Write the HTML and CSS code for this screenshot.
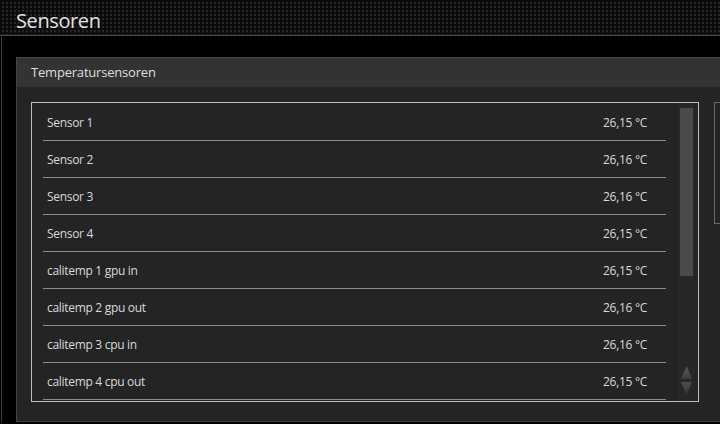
FILE: index.html
```html
<!DOCTYPE html>
<html lang="de">
<head>
<meta charset="utf-8">
<title>Sensoren</title>
<link rel="stylesheet" href="styles.css">
</head>
<body>
<header class="topbar"><h1 class="title">Sensoren</h1></header>
<main class="frame">
  <section class="panel">
    <div class="panel-head">Temperatursensoren</div>
    <div class="panel-body">
      <div class="listbox">
        <ul class="rows">
          <li class="row"><span>Sensor 1</span><span>26,15 °C</span></li>
          <li class="row"><span>Sensor 2</span><span>26,16 °C</span></li>
          <li class="row"><span>Sensor 3</span><span>26,16 °C</span></li>
          <li class="row"><span>Sensor 4</span><span>26,15 °C</span></li>
          <li class="row"><span>calitemp 1 gpu in</span><span>26,15 °C</span></li>
          <li class="row"><span>calitemp 2 gpu out</span><span>26,16 °C</span></li>
          <li class="row"><span>calitemp 3 cpu in</span><span>26,16 °C</span></li>
          <li class="row"><span>calitemp 4 cpu out</span><span>26,15 °C</span></li>
        </ul>
        <div class="scrollbar">
          <div class="thumb"></div>
          <div class="arrows">
            <span class="arrow up"></span>
            <span class="arrow down"></span>
          </div>
        </div>
      </div>
      <div class="sidebox"></div>
    </div>
  </section>
</main>
</body>
</html>
```
FILE: styles.css
```css
* { box-sizing: border-box; }
html, body { margin: 0; padding: 0; }
body {
  width: 720px;
  height: 424px;
  overflow: hidden;
  background: #000;
  font-family: "Open Sans", "Noto Sans", sans-serif;
  color: #dcdcdc;
}
.topbar {
  height: 36px;
  border-bottom: 1px solid #4c4c4c;
  background-color: #0c0c0c;
  background-image:
    linear-gradient(90deg, #0c0c0c 2px, transparent 2px),
    linear-gradient(#0c0c0c 2px, #262626 2px);
  background-size: 4px 4px;
  padding: 11px 0 0 16px;
}
.title {
  margin: 0;
  font-weight: 400;
  font-size: 20px;
  line-height: 20px;
  letter-spacing: -0.4px;
  color: #e2e2e2;
}
.frame {
  margin: 1px 0 0 1px;
  border-left: 1px solid #3a3a3a;
  padding: 20px 0 0 14px;
  overflow: hidden;
}
.panel {
  width: 720px;
  border: 1px solid #444;
  background: #242424;
}
.panel-head {
  height: 29px;
  background: #333;
  padding-left: 14px;
  font-size: 13px;
  line-height: 29px;
  letter-spacing: -0.2px;
  color: #dedede;
}
.panel-body {
  display: flex;
  gap: 15px;
  padding: 15px 0 19px 14px;
}
.listbox {
  flex: none;
  width: 668px;
  border: 1px solid #bdbdbd;
  display: flex;
  padding-left: 11px;
}
.rows {
  list-style: none;
  margin: 0;
  padding: 1px 0;
  width: 623px;
}
.row {
  height: 37px;
  border-bottom: 1px solid #8c8c8c;
  display: flex;
  justify-content: space-between;
  align-items: center;
  padding: 0 19px 0 4px;
  font-size: 12px;
  letter-spacing: -0.3px;
  color: #dadada;
}
.scrollbar {
  margin-left: 12px;
  width: 17px;
  background: #272727;
  display: flex;
  flex-direction: column;
  justify-content: space-between;
  padding: 5px 2px 6px;
}
.thumb {
  height: 168px;
  background: #4a4a4a;
}
.arrows {
  display: flex;
  flex-direction: column;
  align-items: center;
  gap: 3px;
}
.arrow {
  width: 11px;
  height: 13px;
  background: linear-gradient(#5c5c5c, #3c3c3c);
}
.arrow.up { clip-path: polygon(50% 0, 100% 100%, 0 100%); }
.arrow.down { clip-path: polygon(0 0, 100% 0, 50% 100%); background: linear-gradient(#4e4e4e, #333); }
.sidebox {
  flex: none;
  width: 60px;
  height: 122px;
  border: 1px solid #5d6b7a;
}
```
